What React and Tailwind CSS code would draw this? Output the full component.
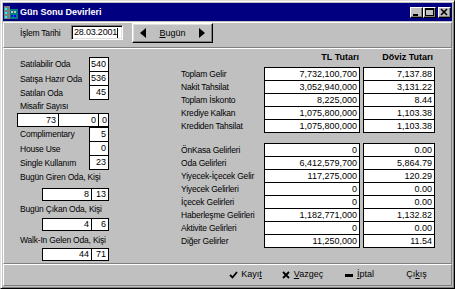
import React from "react";

const topRows = [
  ["Satılabilir Oda", "540"],
  ["Satışa Hazır Oda", "536"],
  ["Satılan Oda", "45"],
];

const midRows = [
  ["Complimentary", "5"],
  ["House Use", "0"],
  ["Single Kullanım", "23"],
];

const totals = [
  ["Toplam Gelir", "7,732,100,700", "7,137.88"],
  ["Nakit Tahsilat", "3,052,940,000", "3,131.22"],
  ["Toplam İskonto", "8,225,000", "8.44"],
  ["Krediye Kalkan", "1,075,800,000", "1,103.38"],
  ["Krediden Tahsilat", "1,075,800,000", "1,103.38"],
];

const incomes = [
  ["ÖnKasa Gelirleri", "0", "0.00"],
  ["Oda Gelirleri", "6,412,579,700", "5,864.79"],
  ["Yiyecek-İçecek Gelir", "117,275,000", "120.29"],
  ["Yiyecek Gelirleri", "0", "0.00"],
  ["İçecek Gelirleri", "0", "0.00"],
  ["Haberleşme Gelirleri", "1,182,771,000", "1,132.82"],
  ["Aktivite Gelirleri", "0", "0.00"],
  ["Diğer Gelirler", "11,250,000", "11.54"],
];

const raised =
  "border border-t-white border-l-white border-r-[#808080] border-b-[#808080]";

// labels run a bit narrower than the figures in the original font
const lbl = "text-[8.5px] tracking-[-0.2px] whitespace-nowrap";

function SingleRows({ rows }) {
  return (
    <div className="flex flex-col">
      {rows.map(([label, value], i) => (
        <div key={label} className="flex">
          <div className={`w-[85px] pl-[16px] flex items-center leading-[13px] ${lbl}`}>{label}</div>
          <div
            className={`w-[20px] h-[14px] bg-white border-x border-b border-black text-right pr-[2px] leading-[13px] ${
              i === 0 ? "border-t h-[15px]" : ""
            }`}
          >
            {value}
          </div>
        </div>
      ))}
    </div>
  );
}

function PairBox({ a, b, className }) {
  return (
    <div className={`ml-[38px] flex w-[67px] h-[13px] bg-white border border-black leading-[11px] ${className}`}>
      <div className="w-[48px] text-right pr-[2px]">{a}</div>
      <div className="flex-1 border-l border-black text-right pr-[2px]">{b}</div>
    </div>
  );
}

function AmountTable({ rows, className }) {
  return (
    <div className={`flex flex-col ${className}`}>
      {rows.map(([label, tl, fx], i) => {
        const edge = i === 0 ? "border-t h-[14px]" : "h-[13px]";
        return (
          <div key={label} className="flex">
            <div className={`w-[83px] flex items-end pb-[1px] leading-[12px] ${lbl}`}>{label}</div>
            <div className={`w-[96px] bg-white border-x border-b border-black text-right pr-[2px] leading-[12px] ${edge}`}>
              {tl}
            </div>
            <div className={`ml-[3px] w-[72px] bg-white border-x border-b border-black text-right pr-[2px] leading-[12px] ${edge}`}>
              {fx}
            </div>
          </div>
        );
      })}
    </div>
  );
}

function TitleButton({ children, className = "" }) {
  return (
    <div
      className={`w-[13px] h-[11px] bg-[#c0c0c0] border border-t-white border-l-white border-r-black border-b-black shadow-[inset_-1px_-1px_0_#808080] flex items-center justify-center ${className}`}
    >
      {children}
    </div>
  );
}

export default function App() {
  return (
    <div className="w-[455px] h-[289px] bg-[#c0c0c0] border border-t-[#dfdfdf] border-l-[#dfdfdf] border-r-black border-b-black shadow-[inset_1px_1px_0_#fff,inset_-1px_-1px_0_#808080] p-[2px] font-['Liberation_Sans',Arial,sans-serif] text-[9px] text-black flex flex-col">
      {/* title bar */}
      <div className="h-[18px] bg-[#000080] flex items-center text-white">
        <svg width="14" height="14" viewBox="0 0 14 14" className="ml-[1px]">
          <rect x="0" y="1" width="6" height="13" fill="#808080" />
          <rect x="1" y="3" width="2" height="2" fill="#00ffff" />
          <rect x="1" y="7" width="2" height="2" fill="#00ffff" />
          <rect x="1" y="11" width="2" height="2" fill="#00ffff" />
          <rect x="6" y="4" width="8" height="10" fill="#008080" />
          <rect x="7" y="6" width="2" height="2" fill="#c0c0c0" />
          <rect x="10" y="6" width="2" height="2" fill="#c0c0c0" />
          <rect x="7" y="10" width="2" height="2" fill="#0000ff" />
          <rect x="10" y="10" width="2" height="2" fill="#0000ff" />
        </svg>
        <span className="ml-[2px] font-bold text-[9px] leading-[12px]">Gün Sonu Devirleri</span>
        <div className="ml-auto mr-[1px] flex items-center">
          <TitleButton>
            <svg width="11" height="9" viewBox="0 0 11 9">
              <rect x="2" y="6" width="5" height="2" fill="#000" />
            </svg>
          </TitleButton>
          <TitleButton>
            <svg width="11" height="9" viewBox="0 0 11 9">
              <rect x="1.5" y="0.5" width="8" height="7" fill="none" stroke="#000" />
              <rect x="1" y="1" width="9" height="1" fill="#000" />
            </svg>
          </TitleButton>
          <TitleButton className="ml-[2px]">
            <svg width="11" height="9" viewBox="0 0 11 9">
              <path d="M2 1 L8 7 M8 1 L2 7" stroke="#000" strokeWidth="1.6" />
            </svg>
          </TitleButton>
        </div>
      </div>

      {/* date row */}
      <div className={`h-[26px] mt-[1px] ${raised} flex items-start`}>
        <div className={`w-[67px] pl-[16px] mt-[4px] leading-[13px] ${lbl}`}>İşlem Tarihi</div>
        <div className="mt-[2px] w-[52px] h-[15px] bg-white border border-t-[#808080] border-l-[#808080] border-b-white border-r-white shadow-[inset_1px_1px_0_#000,inset_-1px_-1px_0_#dfdfdf] flex items-center pl-[2px] leading-[11px] tracking-[-0.2px]">
          <span>28.03.2001</span>
          <span className="w-px h-[10px] bg-black" />
        </div>
        <div className="ml-[9px] w-[81px] h-[20px] border border-t-white border-l-white border-r-black border-b-black shadow-[inset_-1px_-1px_0_#808080,inset_1px_1px_0_#dfdfdf] flex items-center justify-between px-[7px]">
          <svg width="6" height="10" viewBox="0 0 6 10">
            <polygon points="6,0 6,10 0,5" fill="#000" />
          </svg>
          <span className="leading-[12px]">
            <span className="underline underline-offset-1">B</span>ugün
          </span>
          <svg width="6" height="10" viewBox="0 0 6 10">
            <polygon points="0,0 0,10 6,5" fill="#000" />
          </svg>
        </div>
      </div>

      {/* main panel */}
      <div className={`h-[216px] ${raised} flex`}>
        <div className="w-[105px] flex flex-col">
          <div className="mt-[8px]">
            <SingleRows rows={topRows} />
          </div>
          <div className={`pl-[16px] leading-[13px] h-[13px] ${lbl}`}>Misafir Sayısı</div>
          <div className="ml-[13px] flex w-[92px] h-[14px] bg-white border border-black leading-[12px]">
            <div className="w-[40px] text-right pr-[2px]">73</div>
            <div className="w-[40px] border-l border-black text-right pr-[2px]">0</div>
            <div className="flex-1 border-l border-black text-right pr-[1px]">0</div>
          </div>
          <SingleRows rows={midRows} />
          <div className={`mt-[1px] pl-[16px] leading-[13px] ${lbl}`}>Bugün Giren Oda, Kişi</div>
          <PairBox a="8" b="13" className="mt-[4px]" />
          <div className={`mt-[2px] pl-[16px] leading-[13px] ${lbl}`}>Bugün Çıkan Oda, Kişi</div>
          <PairBox a="4" b="6" className="mt-[2px]" />
          <div className={`mt-[3px] pl-[16px] leading-[13px] ${lbl}`}>Walk-In Gelen Oda, Kişi</div>
          <PairBox a="44" b="71" className="mt-[1px]" />
        </div>

        <div className="ml-[72px] flex flex-col">
          <div className="mt-[2px] flex font-bold leading-[13px]">
            <div className="w-[83px]" />
            <div className="w-[96px] text-right pr-[1px]">TL Tutarı</div>
            <div className="ml-[3px] w-[72px] text-right pr-[2px]">Döviz Tutarı</div>
          </div>
          <AmountTable rows={totals} className="mt-[3px]" />
          <AmountTable rows={incomes} className="mt-[10px]" />
        </div>
      </div>

      {/* buttons */}
      <div className={`flex-1 ${raised} flex pl-[213px]`}>
        <button className="w-[57px] flex items-center justify-center gap-[3px]">
          <svg width="9" height="8" viewBox="0 0 9 8">
            <path d="M1 4 L3.5 6.5 L8 1" stroke="#000" strokeWidth="1.8" fill="none" />
          </svg>
          <span>
            Kayı<span className="underline underline-offset-1">t</span>
          </span>
        </button>
        <button className="w-[57px] flex items-center justify-center gap-[4px]">
          <svg width="8" height="8" viewBox="0 0 8 8">
            <path d="M1 1 L7 7 M7 1 L1 7" stroke="#000" strokeWidth="1.8" />
          </svg>
          <span>
            <span className="underline underline-offset-1">V</span>azgeç
          </span>
        </button>
        <button className="w-[57px] flex items-center justify-center gap-[4px]">
          <span className="w-[8px] h-[3px] bg-black" />
          <span>
            <span className="underline underline-offset-1">İ</span>ptal
          </span>
        </button>
        <button className="w-[57px] flex items-center justify-center">
          <span>
            Çı<span className="underline underline-offset-1">k</span>ış
          </span>
        </button>
      </div>
    </div>
  );
}
